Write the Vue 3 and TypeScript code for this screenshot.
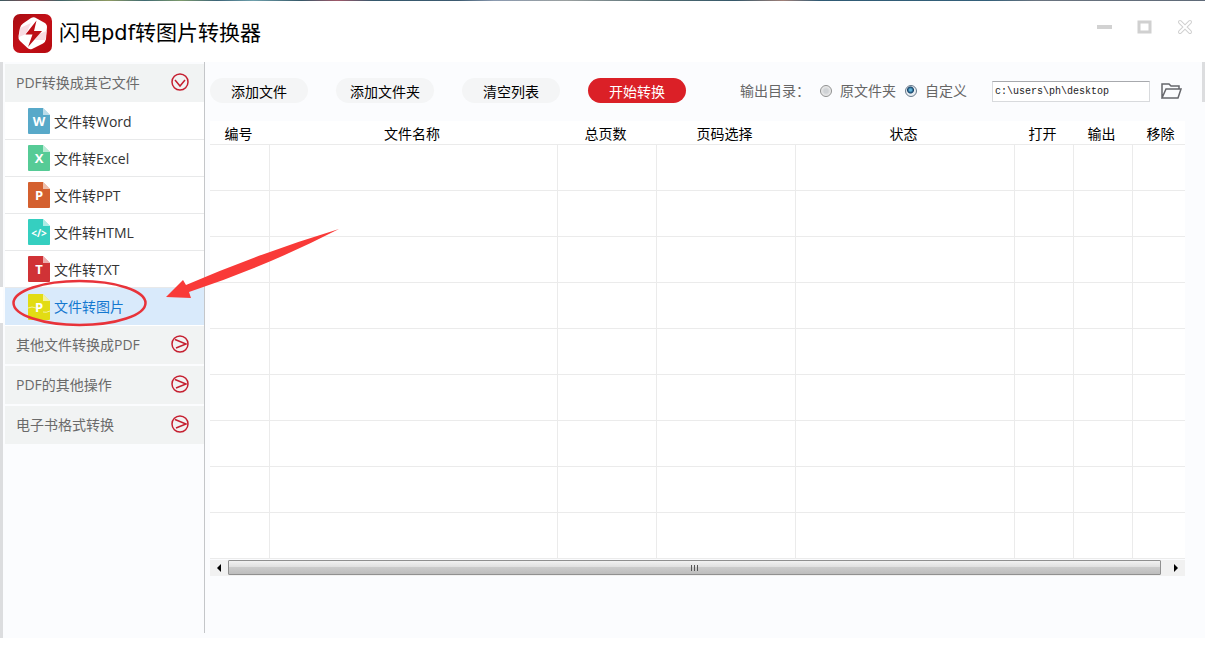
<script setup lang="ts">
import { ref } from 'vue'

interface FileKind { label: string; mark: string; color: string }
interface Column { label: string; cls: string }

const kinds: FileKind[] = [
  { label: '文件转Word', mark: 'W', color: '#58a9c9' },
  { label: '文件转Excel', mark: 'X', color: '#56cb96' },
  { label: '文件转PPT', mark: 'P', color: '#d4602f' },
  { label: '文件转HTML', mark: '</>', color: '#35cfc0' },
  { label: '文件转TXT', mark: 'T', color: '#d03236' },
  { label: '文件转图片', mark: 'P', color: '#e2dc14' },
]
const groups: string[] = ['其他文件转换成PDF', 'PDF的其他操作', '电子书格式转换']
const columns: Column[] = [
  { label: '编号', cls: 'c-no' },
  { label: '文件名称', cls: 'c-name' },
  { label: '总页数', cls: 'c-pages' },
  { label: '页码选择', cls: 'c-range' },
  { label: '状态', cls: 'c-state' },
  { label: '打开', cls: 'c-act' },
  { label: '输出', cls: 'c-act' },
  { label: '移除', cls: 'c-last' },
]
const active = ref(5)
const target = ref('custom')
const path = ref('c:\\users\\ph\\desktop')
</script>

<template>
  <div class="window">
    <header class="titlebar">
      <svg class="logo" viewBox="0 0 39 39" aria-hidden="true">
        <defs>
          <linearGradient id="logoRed" x1="0" y1="0" x2="1" y2="1">
            <stop offset="0" stop-color="#a80c12" />
            <stop offset="0.5" stop-color="#c41018" />
            <stop offset="1" stop-color="#b50a10" />
          </linearGradient>
        </defs>
        <rect width="39" height="39" rx="7" fill="url(#logoRed)" />
        <path d="M22 3.500 L31 8.500 Q34 10 34 13 L33 25 Q32.500 28 30 29.500 L19 35 Q16 36 14 33.500 L7 27 Q5 25 5.500 22 L7 14 Q7.500 11 10 9.500 L18 4 Q20 3 22 3.500Z" fill="#fff" />
        <path d="M7 14 L18 9 L13 20 L6 23Z M26 20 L33.500 17 L32.500 26 L22 26Z" fill="#f8dce3" />
        <path d="M23.500 6.500 L12.500 20.500 L19.500 20.500 L15 33 L29 17 L21 17Z" fill="#bd0e16" />
      </svg>
      <h1>闪电pdf转图片转换器</h1>
      <div class="controls">
        <button type="button" aria-label="最小化"><svg viewBox="0 0 16 16"><path d="M0 6H15V10H0Z" fill="#d2d2d2" /></svg></button>
        <button type="button" aria-label="最大化"><svg viewBox="0 0 16 16"><path d="M2 3H13V13H2Z" fill="none" stroke="#d0d0d0" stroke-width="3" /></svg></button>
        <button type="button" aria-label="关闭"><svg viewBox="0 0 16 16"><path d="M3 3L13 13M13 3L3 13" stroke="#d0d0d0" stroke-width="4" stroke-linecap="round" /><path d="M3 3L13 13M13 3L3 13" stroke="#fff" stroke-width="2" stroke-linecap="round" /></svg></button>
      </div>
    </header>

    <div class="body">
      <nav class="sidebar">
        <button type="button" class="group" aria-expanded="true">
          <span>PDF转换成其它文件</span>
          <svg viewBox="0 0 18 18"><circle cx="9" cy="9" r="8" /><path d="M4 7L9 13L14 7" /></svg>
        </button>
        <ul>
          <li v-for="(kind, i) in kinds" :key="kind.label">
            <button type="button" class="kind" :class="{ active: active === i }" @click="active = i">
              <svg class="file" viewBox="0 0 22 26" aria-hidden="true">
                <path d="M1 0H15L22 7V25Q22 26 21 26H1Q0 26 0 25V1Q0 0 1 0Z" :fill="kind.color" />
                <path d="M15 0L22 7H15Z" fill="#fff" fill-opacity="0.6" />
                <path v-if="i === 5" d="M0 14Q4 12 8 14M15 18Q18 19 22 17" fill="none" stroke="#fff" stroke-opacity="0.6" />
                <text x="11" y="18" text-anchor="middle" :class="{ small: kind.mark.length > 1 }">{{ kind.mark }}</text>
              </svg>
              <span>{{ kind.label }}</span>
            </button>
            <svg v-if="i === 5" class="callout" viewBox="0 0 340 110" aria-hidden="true">
              <ellipse cx="74.500" cy="75" rx="66" ry="22" fill="none" stroke="#e8333a" stroke-width="2.500" />
              <path d="M161 69L178 52L181 57Q255 25 334 1Q260 39 184 64L186 70Z" fill="#f93a38" />
            </svg>
          </li>
        </ul>
        <button v-for="g in groups" :key="g" type="button" class="group" aria-expanded="false">
          <span>{{ g }}</span>
          <svg viewBox="0 0 18 18"><circle cx="9" cy="9" r="8" /><path d="M4 4.500L15 9L5 13" /></svg>
        </button>
      </nav>

      <main>
        <div class="toolbar">
          <button type="button" class="pill">添加文件</button>
          <button type="button" class="pill">添加文件夹</button>
          <button type="button" class="pill">清空列表</button>
          <button type="button" class="pill primary">开始转换</button>
          <div class="output">
            <span class="caption">输出目录：</span>
            <label><input v-model="target" type="radio" name="target" value="source" />原文件夹</label>
            <label><input v-model="target" type="radio" name="target" value="custom" />自定义</label>
            <input v-model="path" class="path" type="text" aria-label="输出目录" />
            <button type="button" class="browse" aria-label="浏览">
              <svg viewBox="0 0 22 18"><path d="M1 16V2H8L10 4H18V7M1 16L5 7H20L17 16Z" /></svg>
            </button>
          </div>
        </div>

        <div class="list">
          <table>
            <thead>
              <tr><th v-for="c in columns" :key="c.label" :class="c.cls" scope="col">{{ c.label }}</th></tr>
            </thead>
            <tbody>
              <tr v-for="r in 9" :key="r"><td v-for="c in columns" :key="c.label"></td></tr>
            </tbody>
          </table>
          <div class="scrollbar">
            <button type="button" class="left" aria-label="向左滚动"><svg viewBox="0 0 4 8"><path d="M4 0V8L0 4Z" /></svg></button>
            <div class="thumb"><i></i><i></i><i></i></div>
            <button type="button" class="right" aria-label="向右滚动"><svg viewBox="0 0 4 8"><path d="M0 0V8L4 4Z" /></svg></button>
          </div>
        </div>
      </main>
    </div>
  </div>
</template>

<style>
body {
  margin: 0;
  background: #fff;
}
</style>

<style scoped>
* {
  box-sizing: border-box;
}
.window {
  display: flex;
  flex-direction: column;
  min-height: 100vh;
  padding-bottom: 7px;
  background: #fff;
  font: 14px/20px "Open Sans", "Noto Sans CJK SC", sans-serif;
  color: #000;
}
button {
  padding: 0;
  border: 0;
  background: none;
  font: inherit;
  color: inherit;
}
svg {
  display: block;
}
.titlebar {
  display: flex;
  align-items: center;
  height: 62px;
  padding: 4px 12px 0 13px;
  background: linear-gradient(90deg, #3c5a60, #8f4a50 3%, #3f6468 5%, #8f9a62 9%, #3f6a72 12%, #7d9a6c 15%, #3c6478 18%, #6fa0ac 21%, #365868 25%, #a05868 28%, #34586c 31%, #3c5a70 38%, #8b9ab0 41%, #9aa0a0 47%, #4f6a70 55%, #35586a 61%, #a08078 65%, #2f5a74 68%, #34607a 82%, #6a7480 86%, #5f6a78) top / 100% 1px no-repeat;
}
.logo {
  width: 39px;
  height: 39px;
}
h1 {
  flex: 1;
  margin: 0 0 0 7px;
  font: 400 21px/30px "DejaVu Sans", "Noto Sans CJK SC", sans-serif;
}
.controls {
  display: flex;
  gap: 24px;
  align-self: flex-start;
  padding-top: 15px;
}
.controls svg {
  width: 16px;
  height: 16px;
}
.body {
  flex: 1;
  display: flex;
  background:
    linear-gradient(#dcdddf, #dcdddf) right top / 3px 40px no-repeat,
    linear-gradient(#dcdddf 225px, #fff 225px 261px, #dcdddf 261px) left top / 3px 100% no-repeat,
    #fbfcfe;
  padding-left: 3px;
}
.sidebar {
  flex: none;
  width: 202px;
  margin-bottom: 5px;
  padding: 2px 0 0 2px;
  border-right: 1px solid #c4c6c9;
}
.group {
  display: flex;
  align-items: center;
  justify-content: space-between;
  width: 100%;
  height: 38px;
  padding: 0 15px 0 11px;
  background: #f1f3f3;
  color: #6a6a6a;
}
.group + .group {
  margin-top: 2px;
}
.group svg {
  width: 18px;
  height: 18px;
  margin-bottom: 3px;
  fill: none;
  stroke: #c51f30;
  stroke-width: 1.500;
}
ul {
  margin: 0;
  padding: 1px 0;
  list-style: none;
  background: #fff;
}
li {
  position: relative;
  height: 37px;
  border-bottom: 1px solid #e8e9ea;
}
li:last-child {
  border-bottom: 0;
}
.kind {
  display: flex;
  align-items: center;
  gap: 4px;
  width: 100%;
  height: 100%;
  padding-left: 23px;
  color: #333;
}
.kind span {
  padding-top: 1px;
}
.kind.active {
  background: #d9eafb;
  color: #1478d0;
}
.file {
  width: 22px;
  height: 26px;
}
.file text {
  fill: #fff;
  font: 700 13px "Open Sans", sans-serif;
}
.file text.small {
  font-size: 10px;
}
.callout {
  position: absolute;
  left: 0;
  top: -60px;
  z-index: 2;
  width: 340px;
  height: 110px;
  pointer-events: none;
}
main {
  flex: 1;
  min-width: 0;
  padding: 16px 20px 0 5px;
}
.toolbar {
  display: flex;
  align-items: flex-start;
  gap: 28px;
  height: 26px;
}
.pill {
  flex: none;
  width: 98px;
  height: 25px;
  padding-top: 2px;
  border-radius: 13px;
  background: #f4f5f6;
}
.pill.primary {
  background: #db2027;
  color: #fff;
}
.output {
  display: flex;
  align-items: center;
  height: 26px;
  margin-left: auto;
  margin-right: 2px;
  color: #666;
}
.caption {
  margin-right: 10px;
}
label {
  display: flex;
  align-items: center;
  gap: 8px;
  margin-right: 9px;
  white-space: nowrap;
}
input[type="radio"] {
  appearance: none;
  width: 12px;
  height: 12px;
  margin: 0;
  border: 1px solid #8e8f8f;
  border-radius: 50%;
  background: radial-gradient(circle, #cfd2d5 0 2px, #eee 5px);
}
input[type="radio"]:checked {
  border-color: #66788a;
  background: radial-gradient(circle at 45% 40%, #62b6dc 0 1px, #123f66 3px, #e8edf1 4px);
}
.path {
  width: 158px;
  height: 21px;
  margin: 0 11px 0 16px;
  padding: 0 2px;
  border: 1px solid #d8dadd;
  border-top-color: #a7a9ad;
  background: #fff;
  color: #222;
  font: 10px "Liberation Mono", monospace;
}
.browse svg {
  width: 22px;
  height: 18px;
  fill: none;
  stroke: #66676c;
  stroke-width: 1.500;
}
.list {
  margin-top: 17px;
}
table {
  width: 100%;
  table-layout: fixed;
  border-collapse: separate;
  border-spacing: 0;
  background: #fff;
}
th {
  height: 24px;
  padding: 2px 2px 0 0;
  border-bottom: 1px solid #ebebeb;
  font-weight: 400;
}
td {
  height: 46px;
  padding: 0;
  border-left: 1px solid #ebebeb;
  border-bottom: 1px solid #ebebeb;
}
td:first-child {
  border-left: 0;
}
.c-no, .c-act {
  width: 59px;
}
.c-name {
  width: 288px;
}
.c-pages {
  width: 99px;
}
.c-range {
  width: 139px;
}
.c-last {
  width: 53px;
  padding-right: 0;
  padding-left: 4px;
}
.scrollbar {
  display: flex;
  height: 16px;
  margin-top: 1px;
  background: #f1f1f1;
}
.scrollbar button {
  display: flex;
  align-items: center;
  justify-content: center;
  width: 18px;
}
.scrollbar .right {
  width: 24px;
  padding-left: 6px;
}
.scrollbar svg {
  width: 4px;
  height: 8px;
}
.thumb {
  flex: 1;
  display: flex;
  align-items: center;
  justify-content: center;
  gap: 2px;
  height: 15px;
  border: 1px solid #909090;
  border-radius: 1px;
  background: linear-gradient(#f2f2f2, #e0e0e0 45%, #cbcbcb 50%, #bdbdbd);
}
.thumb i {
  width: 1px;
  height: 6px;
  background: #555;
}
</style>
